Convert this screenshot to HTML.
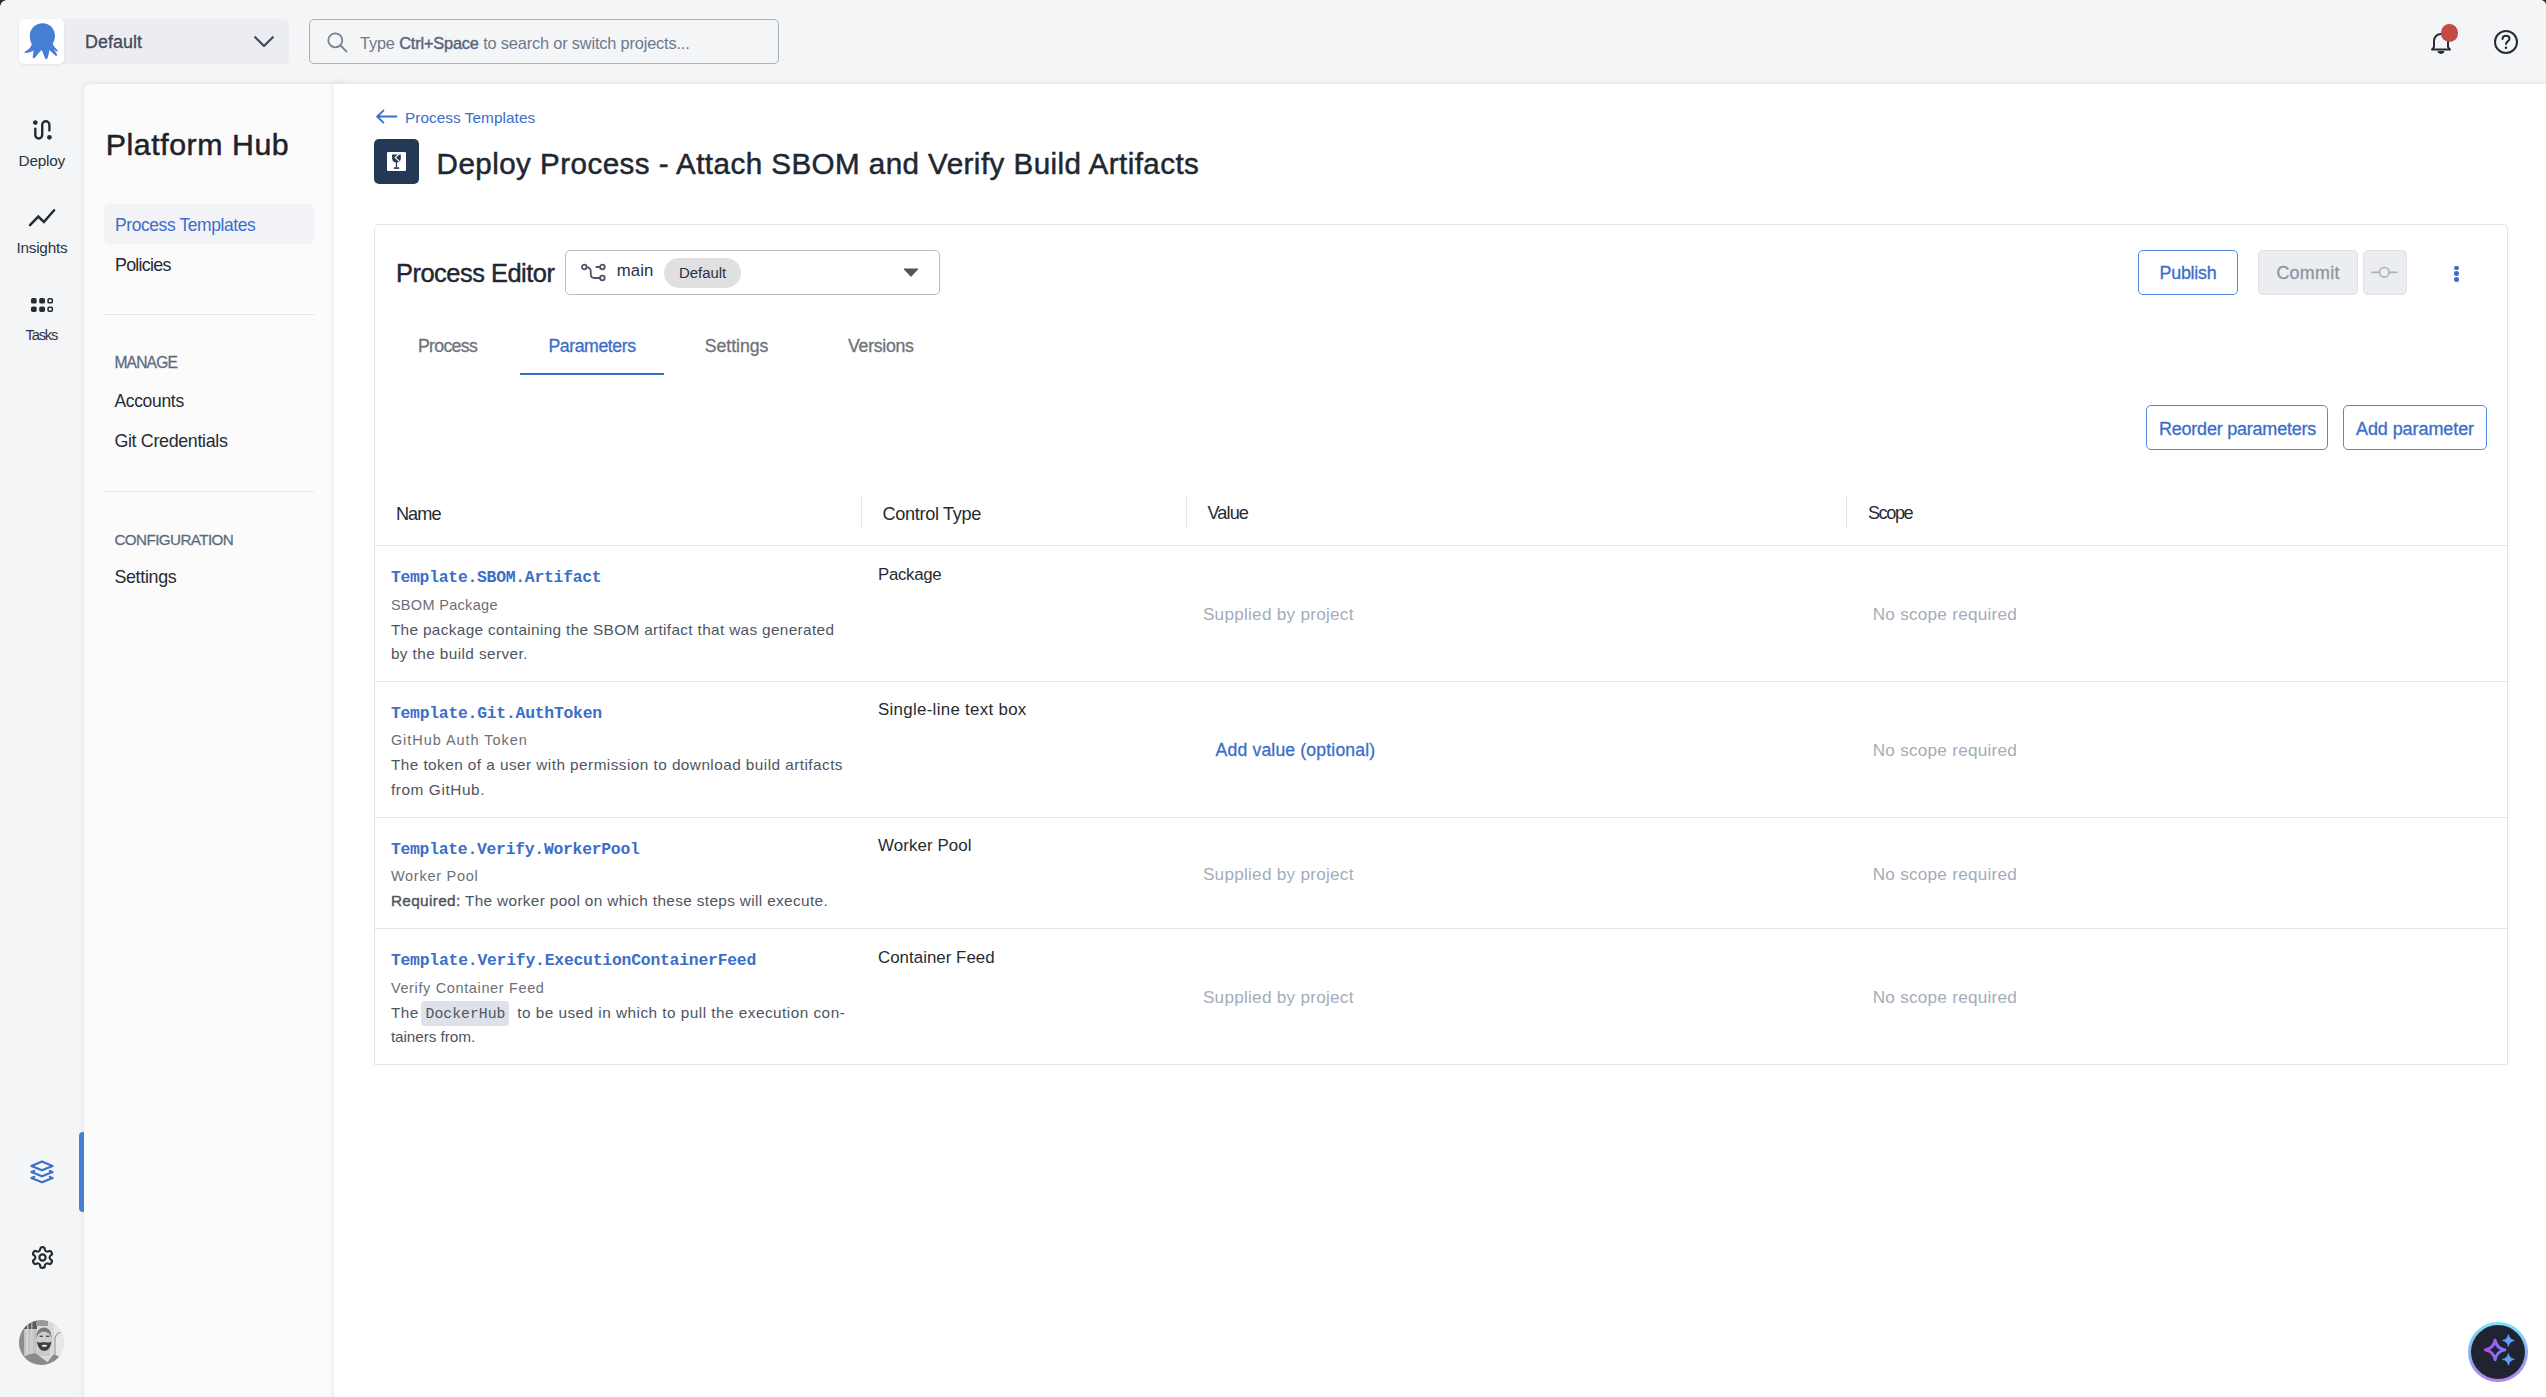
<!DOCTYPE html>
<html><head><meta charset="utf-8">
<style>
html,body{margin:0;padding:0;}
body{width:2546px;height:1397px;overflow:hidden;position:relative;background:#f4f5f7;font-family:"Liberation Sans",sans-serif;}
.a{position:absolute;box-sizing:border-box;}
.t{position:absolute;white-space:nowrap;}
.code{font-family:"Liberation Mono",monospace;font-size:14.8px;background:#dde2ea;border-radius:4px;padding:4.5px 4px 4px 5px;margin-left:-3px;margin-right:3px;color:#4d5562;letter-spacing:0;}
svg{position:absolute;overflow:visible;}
</style></head><body>
<!-- window corners -->
<div class="a" style="left:0;top:0;width:7px;height:7px;background:radial-gradient(circle at 7px 7px, transparent 6.5px, #2e2e2e 7.2px);"></div>
<div class="a" style="right:0;top:0;width:5px;height:5px;background:radial-gradient(circle at 0 5px, transparent 4.5px, #2e2e2e 5.2px);"></div>

<!-- top bar -->
<div class="a" style="left:19px;top:19px;width:270px;height:45px;background:#ecedf0;border-radius:5px;"></div>
<div class="a" style="left:19px;top:19px;width:45px;height:45px;background:#fff;border-radius:5px;box-shadow:0 1px 3px rgba(0,0,0,0.08);"></div>
<svg style="left:19px;top:19px" width="45" height="45" viewBox="0 0 45 45"><path fill="#477fd5" d="M23.8 4.2 C30.5 4.2 36 9.5 36 16.8 C36 20 35 22.5 33.7 24.8 C34.8 27.5 36.5 29.5 38.6 31.3 C39.2 32 38.5 33 37.8 32.5 L34.5 30.3 C36 32 37.5 34 38 35.8 C38.3 37 37 37.2 36.3 36.5 C34 34.5 32 32.5 30.3 31 C30 34 29.5 36.5 28.5 39.3 C27.8 40.5 26.5 40.5 26 39.2 C25 36.5 24 33.5 22.5 31 C20.5 33 18 36.5 16 38.6 C14.8 39.8 13.5 39.5 13.8 38 C14 35.5 14.5 33.5 14.5 31.5 C12 33 9 34.2 6.5 34 C5.3 33.9 5.3 33 6 32.6 C9 31 11.5 29 12.9 25.5 C11.5 23 10.8 20 10.8 16.8 C10.8 9.5 16.5 4.2 23.8 4.2 Z"/></svg>
<svg style="left:254px;top:36px" width="20" height="12" viewBox="0 0 20 12"><path d="M1.2 1.2 L10 10 L18.8 1.2" fill="none" stroke="#3e4a5c" stroke-width="2.2" stroke-linecap="round" stroke-linejoin="round"/></svg>
<div class="a" style="left:309px;top:19px;width:470px;height:45px;border:1.3px solid #a9b1be;border-radius:5px;background:#f4f5f7;"></div>
<svg style="left:327px;top:32px" width="21" height="21" viewBox="0 0 21 21"><circle cx="8.3" cy="8.3" r="7" fill="none" stroke="#778293" stroke-width="1.8"/><path d="M13.5 13.5 L19.6 19.6" stroke="#778293" stroke-width="1.8" stroke-linecap="round"/></svg>
<!-- bell -->
<svg style="left:2429px;top:30px" width="24" height="25" viewBox="0 0 24 25"><path d="M3 19.5 L5 17 L5 11 C5 7 8 4 12 4 C16 4 19 7 19 11 L19 17 L21 19.5 Z" fill="none" stroke="#262b33" stroke-width="2" stroke-linejoin="round"/><path d="M9.3 21.8 Q12 24.6 14.7 21.8 Z" fill="#262b33" stroke="#262b33" stroke-width="1.5" stroke-linejoin="round"/></svg>
<div class="a" style="left:2440.6px;top:24px;width:17.6px;height:17.6px;border-radius:50%;background:#c34a45;"></div>
<svg style="left:2493px;top:29px" width="26" height="26" viewBox="0 0 26 26"><circle cx="13" cy="13" r="11" fill="none" stroke="#262b33" stroke-width="2"/><path d="M9.5 10 C9.5 7.8 11 6.7 13 6.7 C15 6.7 16.5 7.9 16.5 9.8 C16.5 12.3 13 12.5 13 15" fill="none" stroke="#262b33" stroke-width="2" stroke-linecap="round"/><circle cx="13" cy="18.8" r="1.3" fill="#262b33"/></svg>

<!-- left rail icons -->
<svg style="left:22px;top:112px" width="40" height="34" viewBox="0 0 40 34"><circle cx="13.3" cy="10.6" r="2.35" fill="#262b33"/><path d="M13.3 16.6 V23.05 A3.45 3.45 0 0 0 20.2 23.05 V12.8 A3.6 3.6 0 0 1 27.4 12.8 V18.4" fill="none" stroke="#262b33" stroke-width="2.4" stroke-linecap="round"/><circle cx="27.4" cy="25.3" r="2.35" fill="#262b33"/></svg>
<svg style="left:28px;top:208px" width="28" height="20" viewBox="0 0 28 20"><path d="M2 17.2 L10.3 8.6 L15.9 14 L26.1 2.2" fill="none" stroke="#262b33" stroke-width="2.5" stroke-linecap="round" stroke-linejoin="miter"/></svg>
<svg style="left:30px;top:297px" width="25" height="17" viewBox="0 0 25 17">
 <rect x="1" y="1" width="5.7" height="5.6" rx="1.7" fill="#262b33"/><rect x="9.2" y="1" width="5.8" height="5.6" rx="1.7" fill="#262b33"/><rect x="18.1" y="1.8" width="4.2" height="4.0" rx="1.1" fill="none" stroke="#262b33" stroke-width="1.6"/>
 <rect x="1" y="9.4" width="5.7" height="5.6" rx="1.7" fill="#262b33"/><rect x="9.2" y="9.4" width="5.8" height="5.6" rx="1.7" fill="#262b33"/><rect x="18.1" y="10.2" width="4.2" height="4.0" rx="1.1" fill="none" stroke="#262b33" stroke-width="1.6"/>
</svg>
<!-- layers -->
<svg style="left:22px;top:1150px" width="40" height="45" viewBox="0 0 40 45"><g fill="none" stroke="#3c6fc7" stroke-width="2.2" stroke-linecap="round" stroke-linejoin="round"><path d="M20 11.6 L30.6 16.1 L20 20.3 L9.4 16.1 Z"/><path d="M12.2 20.9 L9.4 22.1 L20 26.3 L30.6 22.1 L27.8 20.9"/><path d="M12.2 26.9 L9.4 28.1 L20 32.3 L30.6 28.1 L27.8 26.9"/></g></svg>
<div class="a" style="left:78.7px;top:1132px;width:8px;height:80px;background:#4a82d8;border-radius:4px 0 0 4px;"></div>
<!-- gear -->
<svg style="left:29.5px;top:1244.5px" width="25" height="25" viewBox="0 0 24 24"><path fill="none" stroke="#262b33" stroke-width="2.1" stroke-linecap="round" stroke-linejoin="round" d="M12.22 2h-.44a2 2 0 0 0-2 2v.18a2 2 0 0 1-1 1.73l-.43.25a2 2 0 0 1-2 0l-.15-.08a2 2 0 0 0-2.73.73l-.22.38a2 2 0 0 0 .73 2.73l.15.1a2 2 0 0 1 1 1.72v.51a2 2 0 0 1-1 1.74l-.15.09a2 2 0 0 0-.73 2.73l.22.38a2 2 0 0 0 2.730.73l.15-.08a2 2 0 0 1 2 0l.43.25a2 2 0 0 1 1 1.73V20a2 2 0 0 0 2 2h.44a2 2 0 0 0 2-2v-.18a2 2 0 0 1 1-1.730l.43-.25a2 2 0 0 1 2 0l.15.08a2 2 0 0 0 2.73-.73l.22-.39a2 2 0 0 0-.73-2.73l-.15-.08a2 2 0 0 1-1-1.74v-.5a2 2 0 0 1 1-1.74l.15-.09a2 2 0 0 0 .73-2.73l-.22-.38a2 2 0 0 0-2.73-.73l-.15.08a2 2 0 0 1-2 0l-.43-.25a2 2 0 0 1-1-1.73V4a2 2 0 0 0-2-2z"/><circle cx="12" cy="12" r="3" fill="none" stroke="#262b33" stroke-width="2.1"/></svg>
<!-- avatar -->
<svg style="left:19px;top:1320px" width="45" height="45" viewBox="0 0 45 45">
<defs><clipPath id="avc"><circle cx="22.5" cy="22.5" r="22.5"/></clipPath></defs>
<g clip-path="url(#avc)">
<rect width="45" height="45" fill="#d9d9d9"/>
<rect x="0" y="0" width="18" height="45" fill="#c2c2c2"/>
<rect x="0" y="0" width="5" height="45" fill="#8c8c8c"/>
<rect x="7" y="0" width="2.2" height="45" fill="#d6d6d6"/>
<rect x="11.5" y="0" width="2.2" height="45" fill="#d2d2d2"/>
<rect x="5" y="0" width="13" height="9" fill="#5a5a5a"/>
<rect x="8" y="0" width="1.5" height="9" fill="#bbb"/><rect x="12" y="0" width="1.5" height="9" fill="#aaa"/>
<rect x="17" y="0" width="12" height="6" fill="#9a9a9a"/>
<rect x="35" y="0" width="10" height="45" fill="#e8e8e8"/>
<path d="M36 45 V20 C36 15 39 12.5 41.5 12.5" stroke="#9c9c9c" stroke-width="1.2" fill="none"/>
<rect x="19" y="27" width="12" height="9" fill="#c9c9c9"/>
<ellipse cx="25" cy="19.5" rx="7.6" ry="10.2" fill="#cdcdcd"/>
<path d="M17.6 19 C17.2 11 20.5 7.5 25 7.5 C29.5 7.5 32.8 11 32.4 19 C31.5 14 29 11.8 25 11.8 C21 11.8 18.5 14 17.6 19 Z" fill="#7a7a7a"/>
<path d="M17.8 21 C18.5 27.5 21.5 30.8 25.2 30.8 C29 30.8 32 27.5 32.5 21 C31.2 23.5 29.5 22.3 25.2 22.3 C21 22.3 19.2 23.5 17.8 21 Z" fill="#3e3e3e"/>
<ellipse cx="25.4" cy="25.8" rx="2.9" ry="1.1" fill="#e4e4e4"/>
<rect x="20.6" y="15.6" width="3.3" height="1.4" fill="#4a4a4a"/><rect x="27" y="15.6" width="3.3" height="1.4" fill="#4a4a4a"/>
<path d="M0 45 V39 C6 35.5 11.5 33.6 16.7 33.2 L28.5 42.2 L34.4 34.4 C39 35.5 43 37 45 39 V45 Z" fill="#8a8a8a"/>
</g></svg>

<!-- sidebar panel -->
<div class="a" style="left:84px;top:84px;width:260px;height:1340px;background:#fbfbfb;border-radius:6px 0 0 0;box-shadow:0 0 6px rgba(20,30,50,0.10);"></div>
<div class="a" style="left:104px;top:204px;width:210px;height:39.5px;background:#f2f3f6;border-radius:5px;"></div>
<div class="a" style="left:104px;top:313.6px;width:210px;height:1.2px;background:#e3e5ea;"></div>
<div class="a" style="left:104px;top:490.8px;width:210px;height:1.2px;background:#e3e5ea;"></div>

<!-- main content -->
<div class="a" style="left:334px;top:84px;width:2300px;height:1400px;background:#fff;box-shadow:0 0 7px rgba(20,30,50,0.10);"></div>
<svg style="left:375px;top:109px" width="23" height="16" viewBox="0 0 23 16"><path d="M21.4 7.5 H2.5 M8.4 1.6 L2.2 7.5 L8.4 13.6" fill="none" stroke="#3b6ec8" stroke-width="1.9" stroke-linecap="round" stroke-linejoin="round"/></svg>
<div class="a" style="left:374px;top:139px;width:45px;height:45px;background:#233955;border-radius:5px;"></div>
<div class="a" style="left:386.9px;top:151.7px;width:19.3px;height:19.3px;background:#fff;border-radius:1.2px;"></div>
<svg style="left:386.9px;top:151.7px" width="19.3" height="19.3" viewBox="0 0 19.3 19.3"><path d="M5.1 2.5 H13.8 V6.3 C13.8 8.9 12 10.6 9.45 10.6 C6.9 10.6 5.1 8.9 5.1 6.3 Z" fill="#243a56"/><rect x="8.85" y="10" width="1.25" height="5.8" fill="#243a56"/><rect x="6.8" y="15.3" width="5.4" height="1.6" fill="#243a56"/><path d="M12 2.0 L8.2 5.5 L12.3 9.4" fill="none" stroke="#fff" stroke-width="1.1"/></svg>

<!-- card -->
<div class="a" style="left:374px;top:224px;width:2134px;height:842px;border:1.2px solid #e2e4e9;border-bottom:none;border-radius:5px 5px 0 0;"></div>
<!-- branch selector -->
<div class="a" style="left:565px;top:250px;width:375px;height:45px;border:1.3px solid #b7bdc8;border-radius:5px;"></div>
<svg style="left:581px;top:263px" width="26" height="20" viewBox="0 0 26 20"><circle cx="3.3" cy="4" r="2.3" fill="none" stroke="#4b5563" stroke-width="1.8"/><circle cx="21.4" cy="4" r="2.3" fill="none" stroke="#4b5563" stroke-width="1.8"/><circle cx="21.4" cy="15" r="2.3" fill="none" stroke="#4b5563" stroke-width="1.8"/><path d="M5.6 4.2 C9 4.5 9.8 6 9.8 9 V11.5 C9.8 13.8 11 15 13.5 15 H19" fill="none" stroke="#4b5563" stroke-width="1.8" stroke-linecap="round"/><path d="M15.3 4 H19" stroke="#4b5563" stroke-width="1.8" stroke-linecap="round"/></svg>
<div class="a" style="left:663.8px;top:258px;width:77px;height:29.7px;background:#e0e0e0;border-radius:15px;"></div>
<svg style="left:903px;top:268px" width="16" height="9" viewBox="0 0 16 9"><path d="M1 1 H15 L8 8.4 Z" fill="#4b5563" stroke="#4b5563" stroke-width="1" stroke-linejoin="round"/></svg>
<!-- tabs underline -->
<div class="a" style="left:520px;top:372.5px;width:143.6px;height:2.5px;background:#3b6ec8;"></div>
<!-- buttons -->
<div class="a" style="left:2138px;top:250px;width:99.6px;height:44.5px;border:1.3px solid #5289da;border-radius:5px;"></div>
<div class="a" style="left:2258.3px;top:250px;width:99.5px;height:44.5px;border:1px solid #dfe1e6;background:#ecedf0;border-radius:5px;"></div>
<div class="a" style="left:2363.3px;top:250px;width:43.5px;height:44.5px;border:1px solid #dfe1e6;background:#ecedf0;border-radius:5px;"></div>
<svg style="left:2371px;top:265px" width="27" height="14" viewBox="0 0 27 14"><circle cx="13.3" cy="7.3" r="4.8" fill="none" stroke="#abb2bd" stroke-width="1.7"/><path d="M1 7.3 H8.5 M18.1 7.3 H25.7" stroke="#abb2bd" stroke-width="1.7" stroke-linecap="round"/></svg>
<div class="a" style="left:2454.4px;top:265.7px;width:4.6px;height:4.6px;border-radius:50%;background:#3b6ec8;"></div>
<div class="a" style="left:2454.4px;top:271.4px;width:4.6px;height:4.6px;border-radius:50%;background:#3b6ec8;"></div>
<div class="a" style="left:2454.4px;top:277.2px;width:4.6px;height:4.6px;border-radius:50%;background:#3b6ec8;"></div>
<div class="a" style="left:2146.2px;top:405.3px;width:181.5px;height:44.8px;border:1.3px solid #5289da;border-radius:5px;"></div>
<div class="a" style="left:2343px;top:405.3px;width:143.6px;height:44.8px;border:1.3px solid #5289da;border-radius:5px;"></div>

<!-- table -->
<div class="a" style="left:861px;top:496px;width:1.2px;height:33px;background:#e2e4e9;"></div>
<div class="a" style="left:1186px;top:496px;width:1.2px;height:33px;background:#e2e4e9;"></div>
<div class="a" style="left:1846px;top:496px;width:1.2px;height:33px;background:#e2e4e9;"></div>
<div class="a" style="left:375px;top:545px;width:2132px;height:1.2px;background:#e2e4e9;"></div>
<div class="a" style="left:375px;top:680.7px;width:2132px;height:1.2px;background:#e2e4e9;"></div>
<div class="a" style="left:375px;top:816.7px;width:2132px;height:1.2px;background:#e2e4e9;"></div>
<div class="a" style="left:375px;top:928px;width:2132px;height:1.2px;background:#e2e4e9;"></div>
<div class="a" style="left:376px;top:1063.6px;width:2130px;height:1.4px;background:#e2e4e9;"></div>

<!-- AI button -->
<div class="a" style="left:2468.3px;top:1322.3px;width:59.5px;height:59.5px;border-radius:50%;background:linear-gradient(180deg,#7ee3fb 0%,#8fa6ee 60%,#b184ea 100%);"></div>
<div class="a" style="left:2471px;top:1325px;width:54px;height:54px;border-radius:50%;background:#1f2430;"></div>
<svg style="left:2468px;top:1322px" width="60" height="60" viewBox="0 0 60 60"><defs><linearGradient id="sg" x1="0" y1="0.3" x2="1" y2="0.7"><stop offset="0" stop-color="#b347f2"/><stop offset="1" stop-color="#6f86f6"/></linearGradient></defs>
<path d="M27.10 18.10 Q28.67 26.33 36.90 27.90 Q28.67 29.47 27.10 37.70 Q25.53 29.47 17.30 27.90 Q25.53 26.33 27.10 18.10 Z" fill="none" stroke="url(#sg)" stroke-width="3" stroke-linejoin="round"/>
<path d="M40.40 12.60 Q41.23 17.67 46.30 18.50 Q41.23 19.33 40.40 24.40 Q39.57 19.33 34.50 18.50 Q39.57 17.67 40.40 12.60 Z" fill="#62a0f8" stroke="#62a0f8" stroke-width="0.8" stroke-linejoin="round"/>
<path d="M40.40 31.40 Q41.23 36.47 46.30 37.30 Q41.23 38.13 40.40 43.20 Q39.57 38.13 34.50 37.30 Q39.57 36.47 40.40 31.40 Z" fill="#62a0f8" stroke="#62a0f8" stroke-width="0.8" stroke-linejoin="round"/>
</svg>

<div id="t_def" class="t" style="left:85.00px;top:33.68px;font-size:17.86px;line-height:17.86px;color:#3e4a5c;font-weight:400;font-family:'Liberation Sans', sans-serif;letter-spacing:0.067px;-webkit-text-stroke:0.30px #3e4a5c;">Default</div>
<div id="t_search" class="t" style="left:360.00px;top:34.58px;font-size:16.33px;line-height:16.33px;color:#6b7a8c;font-weight:400;font-family:'Liberation Sans', sans-serif;letter-spacing:-0.161px;">Type <b style="font-weight:400;-webkit-text-stroke:0.4px #56657a;color:#56657a">Ctrl+Space</b> to search or switch projects...</div>
<div id="r_dep" class="t" style="left:18.50px;top:153.01px;font-size:15.35px;line-height:15.35px;color:#2c333d;font-weight:400;font-family:'Liberation Sans', sans-serif;letter-spacing:-0.200px;">Deploy</div>
<div id="r_ins" class="t" style="left:16.50px;top:240.01px;font-size:15.35px;line-height:15.35px;color:#2c333d;font-weight:400;font-family:'Liberation Sans', sans-serif;letter-spacing:-0.257px;">Insights</div>
<div id="r_tsk" class="t" style="left:25.50px;top:327.60px;font-size:14.65px;line-height:14.65px;color:#2c333d;font-weight:400;font-family:'Liberation Sans', sans-serif;letter-spacing:-1.150px;">Tasks</div>
<div id="s_hub" class="t" style="left:105.80px;top:130.47px;font-size:30.28px;line-height:30.28px;color:#1f2328;font-weight:400;font-family:'Liberation Sans', sans-serif;letter-spacing:0.564px;-webkit-text-stroke:0.51px #1f2328;">Platform Hub</div>
<div id="s_pt" class="t" style="left:115.00px;top:216.94px;font-size:17.44px;line-height:17.44px;color:#3b6ec8;font-weight:400;font-family:'Liberation Sans', sans-serif;letter-spacing:-0.387px;">Process Templates</div>
<div id="s_pol" class="t" style="left:115.00px;top:256.78px;font-size:17.86px;line-height:17.86px;color:#262b33;font-weight:400;font-family:'Liberation Sans', sans-serif;letter-spacing:-0.743px;">Policies</div>
<div id="s_man" class="t" style="left:114.40px;top:355.37px;font-size:15.63px;line-height:15.63px;color:#5c6b80;font-weight:400;font-family:'Liberation Sans', sans-serif;letter-spacing:-0.840px;-webkit-text-stroke:0.27px #5c6b80;">MANAGE</div>
<div id="s_acc" class="t" style="left:114.40px;top:393.04px;font-size:17.44px;line-height:17.44px;color:#262b33;font-weight:400;font-family:'Liberation Sans', sans-serif;letter-spacing:-0.286px;">Accounts</div>
<div id="s_git" class="t" style="left:114.40px;top:432.88px;font-size:17.86px;line-height:17.86px;color:#262b33;font-weight:400;font-family:'Liberation Sans', sans-serif;letter-spacing:-0.329px;">Git Credentials</div>
<div id="s_cfg" class="t" style="left:114.40px;top:532.13px;font-size:15.21px;line-height:15.21px;color:#5c6b80;font-weight:400;font-family:'Liberation Sans', sans-serif;letter-spacing:-0.583px;-webkit-text-stroke:0.26px #5c6b80;">CONFIGURATION</div>
<div id="s_set" class="t" style="left:114.40px;top:569.18px;font-size:17.86px;line-height:17.86px;color:#262b33;font-weight:400;font-family:'Liberation Sans', sans-serif;letter-spacing:-0.314px;">Settings</div>
<div id="m_bc" class="t" style="left:405.00px;top:110.01px;font-size:15.35px;line-height:15.35px;color:#3b6ec8;font-weight:400;font-family:'Liberation Sans', sans-serif;letter-spacing:0.050px;">Process Templates</div>
<div id="m_title" class="t" style="left:436.60px;top:149.16px;font-size:29.58px;line-height:29.58px;color:#1f2732;font-weight:400;font-family:'Liberation Sans', sans-serif;letter-spacing:0.448px;-webkit-text-stroke:0.50px #1f2732;">Deploy Process - Attach SBOM and Verify Build Artifacts</div>
<div id="m_pe" class="t" style="left:396.00px;top:261.30px;font-size:25.40px;line-height:25.40px;color:#1f2732;font-weight:400;font-family:'Liberation Sans', sans-serif;letter-spacing:-0.477px;-webkit-text-stroke:0.43px #1f2732;">Process Editor</div>
<div id="m_main" class="t" style="left:616.70px;top:262.74px;font-size:16.73px;line-height:16.73px;color:#2b323c;font-weight:400;font-family:'Liberation Sans', sans-serif;letter-spacing:0.133px;">main</div>
<div id="m_chip" class="t" style="left:679.10px;top:266.06px;font-size:14.93px;line-height:14.93px;color:#2b323c;font-weight:400;font-family:'Liberation Sans', sans-serif;letter-spacing:-0.033px;">Default</div>
<div id="tab1" class="t" style="left:418.00px;top:338.00px;font-size:17.72px;line-height:17.72px;color:#6f737a;font-weight:400;font-family:'Liberation Sans', sans-serif;letter-spacing:-0.700px;-webkit-text-stroke:0.30px #6f737a;">Process</div>
<div id="tab2" class="t" style="left:548.50px;top:338.00px;font-size:17.72px;line-height:17.72px;color:#3b6ec8;font-weight:400;font-family:'Liberation Sans', sans-serif;letter-spacing:-0.444px;-webkit-text-stroke:0.30px #3b6ec8;">Parameters</div>
<div id="tab3" class="t" style="left:704.80px;top:338.00px;font-size:17.72px;line-height:17.72px;color:#6f737a;font-weight:400;font-family:'Liberation Sans', sans-serif;letter-spacing:-0.057px;-webkit-text-stroke:0.30px #6f737a;">Settings</div>
<div id="tab4" class="t" style="left:848.10px;top:338.00px;font-size:17.72px;line-height:17.72px;color:#6f737a;font-weight:400;font-family:'Liberation Sans', sans-serif;letter-spacing:-0.314px;-webkit-text-stroke:0.30px #6f737a;">Versions</div>
<div id="b_pub" class="t" style="left:2159.60px;top:264.58px;font-size:17.86px;line-height:17.86px;color:#3b6ec8;font-weight:400;font-family:'Liberation Sans', sans-serif;letter-spacing:-0.267px;-webkit-text-stroke:0.30px #3b6ec8;">Publish</div>
<div id="b_com" class="t" style="left:2276.40px;top:264.58px;font-size:17.86px;line-height:17.86px;color:#8b95a3;font-weight:400;font-family:'Liberation Sans', sans-serif;letter-spacing:0.320px;-webkit-text-stroke:0.30px #8b95a3;">Commit</div>
<div id="b_reo" class="t" style="left:2159.00px;top:419.56px;font-size:18.00px;line-height:18.00px;color:#3b6ec8;font-weight:400;font-family:'Liberation Sans', sans-serif;letter-spacing:-0.224px;-webkit-text-stroke:0.31px #3b6ec8;">Reorder parameters</div>
<div id="b_add" class="t" style="left:2356.00px;top:419.56px;font-size:18.00px;line-height:18.00px;color:#3b6ec8;font-weight:400;font-family:'Liberation Sans', sans-serif;letter-spacing:-0.083px;-webkit-text-stroke:0.31px #3b6ec8;">Add parameter</div>
<div id="h_name" class="t" style="left:395.90px;top:504.84px;font-size:18.14px;line-height:18.14px;color:#262b33;font-weight:400;font-family:'Liberation Sans', sans-serif;letter-spacing:-0.867px;">Name</div>
<div id="h_ct" class="t" style="left:882.60px;top:504.84px;font-size:18.14px;line-height:18.14px;color:#262b33;font-weight:400;font-family:'Liberation Sans', sans-serif;letter-spacing:-0.345px;">Control Type</div>
<div id="h_val" class="t" style="left:1207.50px;top:504.44px;font-size:18.14px;line-height:18.14px;color:#262b33;font-weight:400;font-family:'Liberation Sans', sans-serif;letter-spacing:-0.900px;">Value</div>
<div id="h_sc" class="t" style="left:1867.90px;top:504.44px;font-size:18.14px;line-height:18.14px;color:#262b33;font-weight:400;font-family:'Liberation Sans', sans-serif;letter-spacing:-1.400px;">Scope</div>
<div id="r0_name" class="t" style="left:390.90px;top:569.94px;font-size:16.39px;line-height:16.39px;color:#3b6ec8;font-weight:700;font-family:'Liberation Mono', monospace;letter-spacing:-0.257px;">Template.SBOM.Artifact</div>
<div id="r0_lab" class="t" style="left:390.90px;top:597.72px;font-size:14.51px;line-height:14.51px;color:#6b7078;font-weight:400;font-family:'Liberation Sans', sans-serif;letter-spacing:0.309px;">SBOM Package</div>
<div id="r0_d0" class="t" style="left:390.90px;top:621.51px;font-size:15.35px;line-height:15.35px;color:#4d5562;font-weight:400;font-family:'Liberation Sans', sans-serif;letter-spacing:0.345px;">The package containing the SBOM artifact that was generated</div>
<div id="r0_d1" class="t" style="left:390.90px;top:646.01px;font-size:15.35px;line-height:15.35px;color:#4d5562;font-weight:400;font-family:'Liberation Sans', sans-serif;letter-spacing:0.411px;">by the build server.</div>
<div id="r0_ct" class="t" style="left:878.00px;top:566.71px;font-size:16.88px;line-height:16.88px;color:#262b33;font-weight:400;font-family:'Liberation Sans', sans-serif;letter-spacing:-0.333px;">Package</div>
<div id="r0_val" class="t" style="left:1202.90px;top:606.32px;font-size:17.16px;line-height:17.16px;color:#a3acb8;font-weight:400;font-family:'Liberation Sans', sans-serif;letter-spacing:0.256px;">Supplied by project</div>
<div id="r0_sc" class="t" style="left:1872.70px;top:606.32px;font-size:17.16px;line-height:17.16px;color:#a3acb8;font-weight:400;font-family:'Liberation Sans', sans-serif;letter-spacing:0.250px;">No scope required</div>
<div id="r1_name" class="t" style="left:390.90px;top:705.64px;font-size:16.39px;line-height:16.39px;color:#3b6ec8;font-weight:700;font-family:'Liberation Mono', monospace;letter-spacing:-0.238px;">Template.Git.AuthToken</div>
<div id="r1_lab" class="t" style="left:390.90px;top:733.42px;font-size:14.51px;line-height:14.51px;color:#6b7078;font-weight:400;font-family:'Liberation Sans', sans-serif;letter-spacing:0.950px;">GitHub Auth Token</div>
<div id="r1_d0" class="t" style="left:390.90px;top:757.21px;font-size:15.35px;line-height:15.35px;color:#4d5562;font-weight:400;font-family:'Liberation Sans', sans-serif;letter-spacing:0.448px;">The token of a user with permission to download build artifacts</div>
<div id="r1_d1" class="t" style="left:390.90px;top:781.71px;font-size:15.35px;line-height:15.35px;color:#4d5562;font-weight:400;font-family:'Liberation Sans', sans-serif;letter-spacing:0.600px;">from GitHub.</div>
<div id="r1_ct" class="t" style="left:878.00px;top:702.41px;font-size:16.88px;line-height:16.88px;color:#262b33;font-weight:400;font-family:'Liberation Sans', sans-serif;letter-spacing:0.305px;">Single-line text box</div>
<div id="r1_val" class="t" style="left:1215.60px;top:741.72px;font-size:17.58px;line-height:17.58px;color:#3b6ec8;font-weight:400;font-family:'Liberation Sans', sans-serif;letter-spacing:0.168px;-webkit-text-stroke:0.30px #3b6ec8;">Add value (optional)</div>
<div id="r1_sc" class="t" style="left:1872.70px;top:742.17px;font-size:17.16px;line-height:17.16px;color:#a3acb8;font-weight:400;font-family:'Liberation Sans', sans-serif;letter-spacing:0.250px;">No scope required</div>
<div id="r2_name" class="t" style="left:390.90px;top:841.64px;font-size:16.39px;line-height:16.39px;color:#3b6ec8;font-weight:700;font-family:'Liberation Mono', monospace;letter-spacing:-0.264px;">Template.Verify.WorkerPool</div>
<div id="r2_lab" class="t" style="left:390.90px;top:869.42px;font-size:14.51px;line-height:14.51px;color:#6b7078;font-weight:400;font-family:'Liberation Sans', sans-serif;letter-spacing:0.740px;">Worker Pool</div>
<div id="r2_d0" class="t" style="left:390.90px;top:893.21px;font-size:15.35px;line-height:15.35px;color:#4d5562;font-weight:400;font-family:'Liberation Sans', sans-serif;letter-spacing:0.353px;"><b style="font-weight:400;-webkit-text-stroke:0.4px #4d5562">Required:</b> The worker pool on which these steps will execute.</div>
<div id="r2_ct" class="t" style="left:878.00px;top:838.41px;font-size:16.88px;line-height:16.88px;color:#262b33;font-weight:400;font-family:'Liberation Sans', sans-serif;letter-spacing:0.100px;">Worker Pool</div>
<div id="r2_val" class="t" style="left:1202.90px;top:865.82px;font-size:17.16px;line-height:17.16px;color:#a3acb8;font-weight:400;font-family:'Liberation Sans', sans-serif;letter-spacing:0.256px;">Supplied by project</div>
<div id="r2_sc" class="t" style="left:1872.70px;top:865.82px;font-size:17.16px;line-height:17.16px;color:#a3acb8;font-weight:400;font-family:'Liberation Sans', sans-serif;letter-spacing:0.250px;">No scope required</div>
<div id="r3_name" class="t" style="left:390.90px;top:952.94px;font-size:16.39px;line-height:16.39px;color:#3b6ec8;font-weight:700;font-family:'Liberation Mono', monospace;letter-spacing:-0.216px;">Template.Verify.ExecutionContainerFeed</div>
<div id="r3_lab" class="t" style="left:390.90px;top:980.72px;font-size:14.51px;line-height:14.51px;color:#6b7078;font-weight:400;font-family:'Liberation Sans', sans-serif;letter-spacing:0.640px;">Verify Container Feed</div>
<div id="r3_d0" class="t" style="left:390.90px;top:1004.51px;font-size:15.35px;line-height:15.35px;color:#4d5562;font-weight:400;font-family:'Liberation Sans', sans-serif;letter-spacing:0.475px;">The <span class="code">DockerHub</span> to be used in which to pull the execution con-</div>
<div id="r3_d1" class="t" style="left:390.90px;top:1029.01px;font-size:15.35px;line-height:15.35px;color:#4d5562;font-weight:400;font-family:'Liberation Sans', sans-serif;letter-spacing:-0.083px;">tainers from.</div>
<div id="r3_ct" class="t" style="left:878.00px;top:949.71px;font-size:16.88px;line-height:16.88px;color:#262b33;font-weight:400;font-family:'Liberation Sans', sans-serif;letter-spacing:0.031px;">Container Feed</div>
<div id="r3_val" class="t" style="left:1202.90px;top:989.22px;font-size:17.16px;line-height:17.16px;color:#a3acb8;font-weight:400;font-family:'Liberation Sans', sans-serif;letter-spacing:0.256px;">Supplied by project</div>
<div id="r3_sc" class="t" style="left:1872.70px;top:989.22px;font-size:17.16px;line-height:17.16px;color:#a3acb8;font-weight:400;font-family:'Liberation Sans', sans-serif;letter-spacing:0.250px;">No scope required</div>
</body></html>
